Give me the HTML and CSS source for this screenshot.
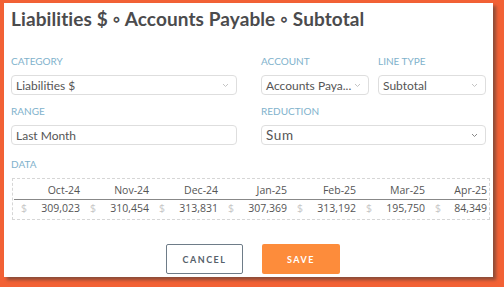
FILE: index.html
```html
<!doctype html>
<html>
<head>
<meta charset="UTF-8">
<title>Edit line</title>
<link rel="stylesheet" href="styles.css">
</head>
<body>
<div class="modal">
	<h1 class="title">Liabilities $ &#9702; Accounts Payable &#9702; Subtotal</h1>
	<div class="form">
		<div class="field">
			<label class="lbl">Category</label>
			<div class="sel">
				<span class="val">Liabilities $</span>
				<svg class="arr" width="7" height="5" viewBox="0 0 7 5"><path d="M1 1l2.5 2.5L6 1" fill="none" stroke="#c4c4c4" stroke-width="1"/></svg>
			</div>
		</div>
		<div class="field pair">
			<div>
				<label class="lbl">Account</label>
				<div class="sel">
					<span class="val">Accounts Paya...</span>
					<svg class="arr" width="7" height="5" viewBox="0 0 7 5"><path d="M1 1l2.5 2.5L6 1" fill="none" stroke="#c4c4c4" stroke-width="1"/></svg>
				</div>
			</div>
			<div>
				<label class="lbl">Line Type</label>
				<div class="sel">
					<span class="val">Subtotal</span>
					<svg class="arr" width="7" height="5" viewBox="0 0 7 5"><path d="M1 1l2.5 2.5L6 1" fill="none" stroke="#c4c4c4" stroke-width="1"/></svg>
				</div>
			</div>
		</div>
		<div class="field last">
			<label class="lbl">Range</label>
			<div class="sel">
				<span class="val">Last Month</span>
			</div>
		</div>
		<div class="field last">
			<label class="lbl">Reduction</label>
			<div class="sel">
				<span class="val sum">Sum</span>
				<svg class="arr" width="7" height="5" viewBox="0 0 7 5"><path d="M1 1l2.5 2.5L6 1" fill="none" stroke="#888" stroke-width="1"/></svg>
			</div>
		</div>
	</div>
	<label class="lbl">Data</label>
	<div class="data">
		<table>
			<colgroup>
				<col class="c-first"><col class="c-val">
				<col class="c-cur"><col class="c-val">
				<col class="c-cur"><col class="c-val">
				<col class="c-cur"><col class="c-val">
				<col class="c-cur"><col class="c-val">
				<col class="c-cur"><col class="c-val">
				<col class="c-cur"><col class="c-last">
			</colgroup>
			<thead>
				<tr><th colspan="2">Oct-24</th><th colspan="2">Nov-24</th><th colspan="2">Dec-24</th><th colspan="2">Jan-25</th><th colspan="2">Feb-25</th><th colspan="2">Mar-25</th><th colspan="2">Apr-25</th></tr>
			</thead>
			<tbody>
				<tr>
					<td class="cur first">$</td><td>309,023</td>
					<td class="cur">$</td><td>310,454</td>
					<td class="cur">$</td><td>313,831</td>
					<td class="cur">$</td><td>307,369</td>
					<td class="cur">$</td><td>313,192</td>
					<td class="cur">$</td><td>195,750</td>
					<td class="cur">$</td><td>84,349</td>
				</tr>
			</tbody>
		</table>
	</div>
	<div class="btns">
		<button class="btn cancel">Cancel</button>
		<button class="btn save">Save</button>
	</div>
</div>
</body>
</html>
```

FILE: styles.css
```css
*{margin:0;padding:0;box-sizing:border-box;}
body{background:#f26135;font-family:Lato,"Open Sans",sans-serif;width:504px;height:287px;overflow:hidden;}
.modal{width:489px;height:274px;margin:3px 0 0 4px;background:#fff;box-shadow:3px 3px 3px rgba(60,60,60,.55);padding:5px 7px 0 7px;}
.title{font-size:19px;line-height:22px;font-weight:700;color:#4b4b4d;letter-spacing:.1px;}
.form{display:grid;grid-template-columns:226px 225px;column-gap:24px;margin-top:25px;}
.field{margin-bottom:10px;}
.field.last{margin-bottom:13px;}
.pair{display:grid;grid-template-columns:108px 108px;column-gap:9px;}
.lbl{display:block;font-size:10px;line-height:12px;color:#7fb2cc;text-transform:uppercase;margin-bottom:8px;}
.sel{height:20px;border:1px solid #dedede;border-radius:4px;display:flex;align-items:center;justify-content:space-between;padding:0 7px 0 4px;}
.val{font-size:12px;color:#555;white-space:nowrap;}
.sum{font-size:13.5px;letter-spacing:.6px;}
.arr{flex:none;}
.data{margin:3px -4px 0 1px;border:1px dashed #d6d6d6;padding:2px 0 4px 1px;}
table{width:473px;table-layout:fixed;border-collapse:collapse;font-family:"Open Sans",sans-serif;font-size:10.5px;color:#555;}
.c-first{width:17px;}
.c-cur{width:20px;}
.c-val{width:49px;}
.c-last{width:42px;}
th{font-weight:400;text-align:right;line-height:15px;padding:2px 0 1px;border-bottom:1px solid #888;white-space:nowrap;}
td{text-align:right;line-height:14px;padding:1px 0 0;white-space:nowrap;}
td.cur{text-align:left;color:#c6c6c6;padding-left:10px;}
td.first{padding-left:7px;}
.btns{display:flex;justify-content:center;gap:19px;margin-top:24px;padding-left:9px;}
.btn{width:78px;height:30px;font-family:Lato,sans-serif;font-weight:700;font-size:9px;letter-spacing:1.5px;text-transform:uppercase;border-radius:2px;}
.cancel{width:77px;background:#fff;border:1.5px solid #6e7c88;color:#56616b;}
.save{background:#fd8c3b;border:none;color:#fff;}
```
